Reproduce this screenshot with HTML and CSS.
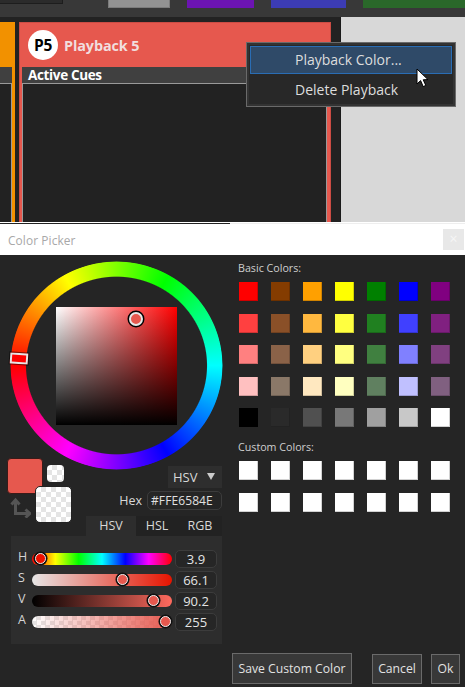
FILE: index.html
```html
<!DOCTYPE html>
<html lang="en">
<head>
<meta charset="utf-8">
<title>Color Picker</title>
<link rel="stylesheet" href="styles.css">
</head>
<body>
<div class="shot">
  <section class="app">
    <div class="topbar">
      <div class="top-box"></div>
      <div class="top-tab tab-grey"></div>
      <div class="top-tab tab-purple"></div>
      <div class="top-tab tab-blue"></div>
      <div class="top-tab tab-green"></div>
    </div>
    <div class="workspace">
      <div class="board">
        <div class="card card-orange">
          <div class="card-head"></div>
          <div class="card-bar"></div>
          <div class="card-list"></div>
        </div>
        <div class="card card-red">
          <div class="card-head">
            <span class="badge">P5</span>
            <span class="card-title">Playback 5</span>
          </div>
          <div class="card-bar">Active Cues</div>
          <div class="card-list"></div>
        </div>
      </div>
      <div class="side"></div>
    </div>
    <div class="menu">
      <div class="menu-item is-active">Playback Color...</div>
      <div class="menu-item">Delete Playback</div>
    </div>
    <svg class="cursor" viewBox="0 0 14 20" width="14" height="20" aria-hidden="true">
      <path d="M1 1 V16 L4.6 12.6 L7.2 18.6 L9.8 17.4 L7.2 11.8 L12 11.6 Z" fill="#fff" stroke="#000" stroke-width="1"/>
    </svg>
  </section>

  <div class="seam"></div>

  <section class="dialog">
    <header class="titlebar">
      <span class="title-text">Color Picker</span>
      <span class="close">×</span>
    </header>
    <div class="dialog-body">
      <div class="col-left">
        <div class="wheel-wrap">
          <div class="wheel"></div>
          <div class="sv">
            <span class="sv-handle"></span>
          </div>
          <span class="hue-handle"></span>
        </div>
        <div class="mid-row">
          <div class="chips">
            <span class="chip chip-current"></span>
            <span class="chip chip-small checker"></span>
            <span class="chip chip-prev checker"></span>
            <svg class="swap" viewBox="0 0 21 21" width="21" height="21" aria-hidden="true">
              <path d="M5.5 18 V4 M1.5 7.5 L5.5 3 L9.5 7.5 M5.5 16.5 H19 M15.5 12.5 L20 16.5 L15.5 20.5" fill="none" stroke="#555" stroke-width="3"/>
            </svg>
          </div>
          <div class="mid-controls">
            <div class="mode-select"><span>HSV</span><span class="caret"></span></div>
            <div class="hex-row">
              <span class="hex-label">Hex</span>
              <span class="hex-input">#FFE6584E</span>
            </div>
          </div>
        </div>
        <div class="tabs">
          <span class="tab is-active">HSV</span>
          <span class="tab tab-hsl">HSL</span>
          <span class="tab tab-rgb">RGB</span>
        </div>
        <div class="panel">
          <div class="slider-row">
            <span class="s-label">H</span>
            <div class="track track-h"><span class="knob knob-h"></span></div>
            <span class="s-value">3.9</span>
          </div>
          <div class="slider-row">
            <span class="s-label">S</span>
            <div class="track track-s"><span class="knob knob-s"></span></div>
            <span class="s-value">66.1</span>
          </div>
          <div class="slider-row">
            <span class="s-label">V</span>
            <div class="track track-v"><span class="knob knob-v"></span></div>
            <span class="s-value">90.2</span>
          </div>
          <div class="slider-row">
            <span class="s-label">A</span>
            <div class="track track-a"><span class="knob knob-a"></span></div>
            <span class="s-value">255</span>
          </div>
        </div>
      </div>
      <div class="col-right">
        <div class="group-label">Basic Colors:</div>
        <div class="grid">
          <i class="c c11"></i><i class="c c12"></i><i class="c c13"></i><i class="c c14"></i><i class="c c15"></i><i class="c c16"></i><i class="c c17"></i>
          <i class="c c21"></i><i class="c c22"></i><i class="c c23"></i><i class="c c24"></i><i class="c c25"></i><i class="c c26"></i><i class="c c27"></i>
          <i class="c c31"></i><i class="c c32"></i><i class="c c33"></i><i class="c c34"></i><i class="c c35"></i><i class="c c36"></i><i class="c c37"></i>
          <i class="c c41"></i><i class="c c42"></i><i class="c c43"></i><i class="c c44"></i><i class="c c45"></i><i class="c c46"></i><i class="c c47"></i>
          <i class="c c51"></i><i class="c c52"></i><i class="c c53"></i><i class="c c54"></i><i class="c c55"></i><i class="c c56"></i><i class="c c57"></i>
        </div>
        <div class="group-label group-custom">Custom Colors:</div>
        <div class="grid">
          <i class="c c57"></i><i class="c c57"></i><i class="c c57"></i><i class="c c57"></i><i class="c c57"></i><i class="c c57"></i><i class="c c57"></i>
          <i class="c c57"></i><i class="c c57"></i><i class="c c57"></i><i class="c c57"></i><i class="c c57"></i><i class="c c57"></i><i class="c c57"></i>
        </div>
        <div class="footer">
          <button class="btn btn-save">Save Custom Color</button>
          <button class="btn btn-cancel">Cancel</button>
          <button class="btn btn-ok">Ok</button>
        </div>
      </div>
    </div>
  </section>
</div>
</body>
</html>
```
FILE: styles.css
```css
* { box-sizing: border-box; }
html, body { margin: 0; padding: 0; background: #fff; }
body { font-family: "Open Sans", "Noto Sans", "Liberation Sans", sans-serif; }
.shot { width: 465px; display: flex; flex-direction: column; }

/* top application area */
.app { position: relative; height: 222px; display: flex; flex-direction: column; overflow: visible; }
.topbar { height: 17px; background: #383838; display: flex; align-items: flex-start; gap: 17px; flex: none; }
.top-box { width: 63px; height: 4px; background: #2b2b2b; border: 1px solid #1d1d1d; border-top: 0; border-left: 0; margin-right: 28px; }
.top-tab { height: 8px; }
.tab-grey { width: 62px; background: #939393; border: 1px solid #7c7c7c; border-top: 0; }
.tab-purple { width: 67px; background: #6c14b2; }
.tab-blue { width: 75px; background: #3c3cb4; }
.tab-green { flex: 1; background: #2a682a; }
.workspace { flex: 1; display: flex; min-height: 0; }
.board { width: 341px; background: #222; border-right: 1px solid #1a1a1a; display: flex; gap: 4px; padding-top: 5px; }
.side { flex: 1; background: #d8d8d8; }
.card { display: flex; flex-direction: column; }
.card-orange { width: 15px; background: #f29100; padding-right: 3px; }
.card-red { width: 312px; background: #e6584e; border: 1px solid #cc4c44; border-bottom: 0; padding: 0 3px 0 2px; }
.card-head { height: 44px; display: flex; align-items: center; flex: none; padding-left: 6px; gap: 6px; }
.card-bar { height: 16px; flex: none; background: #404040; color: #fff; font-size: 13.5px; font-weight: 700; line-height: 16px; padding-left: 6px; letter-spacing: -0.35px; white-space: nowrap; }
.card-list { flex: 1; background: #222; border: 1px solid #9a9a9a; border-bottom: 0; }
.card-orange .card-head { height: 45px; }
.card-orange .card-list { border-left: 0; }
.badge { width: 30px; height: 30px; border-radius: 50%; background: #fff; color: #000; font-size: 15.5px; font-weight: 700; display: flex; align-items: center; justify-content: center; letter-spacing: -0.4px; flex: none; }
.card-title { color: #f1dede; font-size: 14.4px; font-weight: 700; white-space: nowrap; letter-spacing: -0.1px; }

/* context menu */
.menu { position: absolute; left: 246px; top: 42px; width: 210px; height: 65px; background: #282828; border: 1px solid #6a6a6a; box-shadow: inset 0 0 0 2px #333; padding: 3px; }
.menu-item { height: 29px; line-height: 29px; padding-left: 44px; font-size: 14px; color: #ddd; white-space: nowrap; border: 1px solid transparent; }
.menu-item.is-active { height: 28px; background: #2f4a68; border-color: #2a6db4; line-height: 26px; }
.cursor { position: absolute; left: 416px; top: 68px; }

.seam { height: 2px; background: linear-gradient(#fff 0 1px, transparent 1px), linear-gradient(to right, #222 0 230px, #eee 230px); }

/* dialog */
.dialog { display: flex; flex-direction: column; height: 463px; }
.titlebar { height: 31px; background: #fff; display: flex; align-items: center; justify-content: space-between; padding: 0 1px 1px 8px; flex: none; }
.title-text { color: #a8a8a8; font-size: 11.9px; letter-spacing: .1px; padding-top: 1px; }
.close { width: 21px; height: 21px; background: #e8e8e8; color: #f6f6f6; font-size: 14px; line-height: 20px; text-align: center; }
.dialog-body { flex: 1; background: #252525; display: flex; min-height: 0; }
.col-left { width: 222px; flex: none; display: flex; flex-direction: column; }
.col-right { flex: 1; display: flex; flex-direction: column; padding-left: 16px; }

.wheel-wrap { position: relative; width: 213px; height: 209px; margin: 6px 0 0 9.5px; display: flex; align-items: center; justify-content: center; flex: none; }
.wheel { position: absolute; inset: 0; border-radius: 50%; background: conic-gradient(from 270deg, #f00, #ff0, #0f0, #0ff, #00f, #f0f, #f00); -webkit-mask: radial-gradient(closest-side, transparent 84.5%, #000 85.5%, #000 99%, transparent 100%); mask: radial-gradient(closest-side, transparent 84.5%, #000 85.5%, #000 99%, transparent 100%); }
.sv { position: relative; width: 121px; height: 118px; margin-left: 1px; background: linear-gradient(to top, #000, rgba(0,0,0,0)), linear-gradient(to right, #fff, #f00); }
.sv-handle { position: absolute; left: 73px; top: 5px; width: 14px; height: 14px; border-radius: 50%; background: #e6584e; border: 2px solid #e8e8e8; box-shadow: 0 0 0 1.5px #000; }
.hue-handle { position: absolute; left: 0; top: 92px; width: 18px; height: 11px; background: #f00; border: 2px solid #e6e6e6; outline: 1px solid rgba(0,0,0,.5); transform: rotate(3.9deg); }

.mid-row { display: flex; justify-content: space-between; height: 58px; margin-top: -12px; flex: none; position: relative; }
.chips { position: relative; width: 80px; }
.chip { position: absolute; display: block; border-radius: 4px; }
.checker { background: repeating-conic-gradient(#e4e4e4 0 25%, #fff 0 50%) 0 0 / 10px 10px; }
.chip-current { left: 7px; top: 0; width: 36px; height: 36px; background: #e6584e; border: 1px solid #3a1a18; }
.chip-small { left: 47px; top: 7px; width: 17px; height: 17px; }
.chip-prev { left: 35px; top: 28px; width: 37px; height: 37px; border-radius: 5px; border: 1px solid #222; }
.swap { position: absolute; left: 10px; top: 39px; }
.mid-controls { display: flex; flex-direction: column; align-items: flex-end; padding-top: 8px; }
.mode-select { width: 54px; height: 22px; background: #2e2e2e; color: #d8d8d8; font-size: 13px; display: flex; align-items: center; justify-content: space-between; padding: 0 7px 0 5px; }
.caret { width: 0; height: 0; border-left: 4px solid transparent; border-right: 4px solid transparent; border-top: 7px solid #ccc; margin-bottom: 2px; }
.hex-row { display: flex; align-items: center; gap: 5px; margin-top: 3px; }
.hex-label { color: #d8d8d8; font-size: 12.5px; }
.hex-input { width: 75px; height: 19px; border: 1px solid #3c3c3c; border-radius: 5px; color: #e0e0e0; font-size: 12px; line-height: 17px; padding-left: 3px; white-space: nowrap; letter-spacing: .1px; }

.tabs { display: flex; justify-content: flex-end; height: 20px; flex: none; }
.tab { height: 20px; line-height: 20px; text-align: center; color: #d8d8d8; font-size: 12.5px; background: #222; }
.tab.is-active { width: 50px; background: #2d2d2d; }
.tab-hsl { width: 42px; }
.tab-rgb { width: 44px; }

.panel { width: 211px; height: 108px; margin-left: 11px; background: #2d2d2d; padding-top: 14px; display: flex; flex-direction: column; gap: 3.4px; flex: none; }
.slider-row { height: 17.6px; display: flex; align-items: center; }
.s-label { width: 21px; padding-left: 7px; color: #d4d4d4; font-size: 12.5px; line-height: 14px; margin-top: -4px; }
.track { position: relative; width: 140px; height: 12.5px; border-radius: 6px; }
.track-h { background: linear-gradient(to right, #f00, #ff0, #0f0, #0ff, #00f, #f0f, #f00); }
.track-s { background: linear-gradient(to right, #e6e6e6, #e61400); }
.track-v { background: linear-gradient(to right, #000, #ff6a5e); }
.track-a { background: linear-gradient(to right, rgba(230,88,78,0), #e6584e), repeating-conic-gradient(#e4e4e4 0 25%, #fff 0 50%) 0 0 / 9px 9px; }
.knob { position: absolute; top: 50%; width: 11px; height: 11px; margin: -5.5px 0 0 -5.5px; border-radius: 50%; border: 1.5px solid #eee; box-shadow: 0 0 0 1.5px #111; background: #e6584e; }
.knob-h { left: 8px; background: #f01000; }
.knob-s { left: 90.5px; }
.knob-v { left: 121px; }
.knob-a { left: 133px; }
.s-value { width: 42px; height: 18px; margin-left: 3px; border: 1px solid #3c3c3c; border-radius: 5px; background: #262626; color: #e4e4e4; font-size: 13px; line-height: 17px; text-align: center; }

.group-label { color: #cfcfcf; font-size: 10.7px; line-height: 14px; margin-top: 6px; white-space: nowrap; }
.grid { display: grid; grid-template-columns: repeat(7, 19px); column-gap: 13px; row-gap: 12.6px; margin: 7px 0 0 1px; }
.group-custom { margin-top: 13px; }
.c { display: block; height: 19px; box-shadow: inset -1px -1px 0 rgba(0,0,0,.18); }
.c11 { background: #f00; } .c12 { background: #843c00; } .c13 { background: #ffa000; } .c14 { background: #ff0; } .c15 { background: #008000; } .c16 { background: #00f; } .c17 { background: #800080; }
.c21 { background: #ff4040; } .c22 { background: #8a5028; } .c23 { background: #ffb83f; } .c24 { background: #ffff40; } .c25 { background: #208020; } .c26 { background: #4040ff; } .c27 { background: #802080; }
.c31 { background: #ff8080; } .c32 { background: #8a6248; } .c33 { background: #ffd080; } .c34 { background: #ffff80; } .c35 { background: #408040; } .c36 { background: #8080ff; } .c37 { background: #804080; }
.c41 { background: #ffc0c0; } .c42 { background: #8a7868; } .c43 { background: #ffe8c0; } .c44 { background: #ffffc0; } .c45 { background: #608060; } .c46 { background: #c0c0ff; } .c47 { background: #806080; }
.c51 { background: #000; } .c52 { background: #2a2a2a; } .c53 { background: #505050; } .c54 { background: #787878; } .c55 { background: #a0a0a0; } .c56 { background: #c8c8c8; } .c57 { background: #fff; }

.footer { margin: auto 0 3px -6px; display: flex; align-items: center; }
.btn { font: inherit; font-size: 12.2px; color: #e2e2e2; background: #383838; border: 1px solid #6a6a6a; padding: 0; height: 30px; }
.btn-save { width: 120px; height: 31px; }
.btn-cancel { width: 50px; margin-left: 20px; }
.btn-ok { width: 29px; margin-left: 9px; }
```
